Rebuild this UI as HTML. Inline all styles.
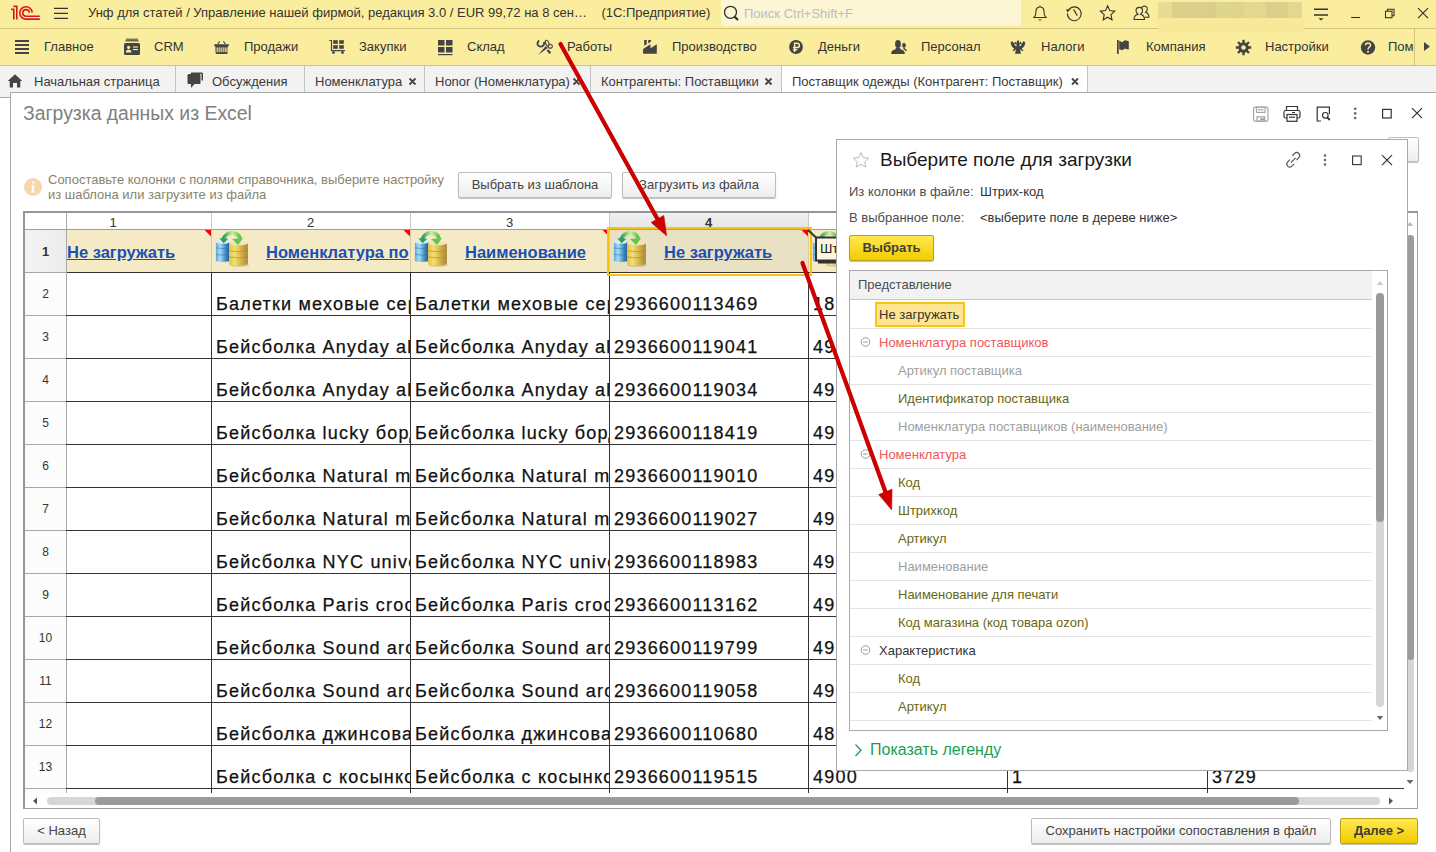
<!DOCTYPE html>
<html><head><meta charset="utf-8">
<style>
*{box-sizing:border-box}
html,body{margin:0;padding:0}
body{width:1436px;height:852px;overflow:hidden;position:relative;background:#fff;font-family:"Liberation Sans",sans-serif;color:#333;font-size:13px}
.a{position:absolute}
.t{position:absolute;white-space:nowrap;line-height:1}
svg{position:absolute;overflow:visible}
.btn{position:absolute;height:26px;border:1px solid #BDBDBD;border-radius:2px;background:linear-gradient(#fff,#EDEDED);box-shadow:0 1px 1px rgba(0,0,0,.25);font-size:13px;color:#444;text-align:center;line-height:24px;white-space:nowrap}
.cell{position:absolute;font-size:18px;color:#111;white-space:nowrap;overflow:hidden;line-height:20px;letter-spacing:1.2px;-webkit-text-stroke:0.25px #111}
</style></head><body>
<div class="a" style="left:0;top:0;width:1436px;height:28px;background:#FBED9E"></div>
<div class="a" style="left:0;top:28px;width:1436px;height:1px;background:#D3C37B"></div>
<svg style="left:0;top:0" width="50" height="28"><g fill="none" stroke="#D71920" stroke-width="1.6">
<path d="M11.1 9.4H13.8V19.6"/><path d="M13.3 6.4H16.8V19.6"/>
<path d="M32.2 12.6A6.2 6.2 0 1 0 26 19.1H39.8"/><path d="M29.3 12.6A3.3 3.3 0 1 0 26 16.2H39.8"/></g></svg>
<svg style="left:0;top:0" width="80" height="28"><g stroke="#333" stroke-width="1.2"><path d="M54 8.4H68M54 13.4H68M54 18.4H68"/></g></svg>
<div class="t" style="left:88px;top:6px;font-size:13px;color:#333">Унф для статей / Управление нашей фирмой, редакция 3.0 / EUR 99,72 на 8 сен…&nbsp;&nbsp;&nbsp;&nbsp;(1С:Предприятие)</div>
<div class="a" style="left:721px;top:0;width:300px;height:26px;background:#FDF6D5;border-radius:0 0 2px 2px"></div>
<svg style="left:0;top:0" width="760" height="28"><circle cx="730.5" cy="12.3" r="6" fill="none" stroke="#333" stroke-width="1.3"/><path d="M734.6 16.6L738 20" stroke="#333" stroke-width="2.2"/></svg>
<div class="t" style="left:744px;top:7px;font-size:13px;color:#B9BCC6">Поиск Ctrl+Shift+F</div>
<svg style="left:0;top:0" width="1436" height="28"><g fill="none" stroke="#333" stroke-width="1.1">
<path d="M1033.2 17.5H1046.8M1034 17.5C1036 15.5 1036 14 1036 11.5C1036 8.5 1038 7 1040 7C1042 7 1044 8.5 1044 11.5C1044 14 1044 15.5 1046 17.5M1040 5.4V7"/>
<path d="M1068.8 9.6A6.9 6.9 0 1 1 1067.4 13.4"/><path d="M1073.6 9.4L1077.2 15.6"/>
<path d="M1107.6 5.8L1109.7 10.6L1114.8 11.2L1111 14.6L1112 19.8L1107.6 17.2L1103.2 19.8L1104.2 14.6L1100.4 11.2L1105.5 10.6Z"/>
<path d="M1134 19.5C1134 16.2 1136 14.8 1138 14.2C1136.5 13.2 1136 12 1136 10.8C1136 8.8 1137.5 7.4 1139.3 7.4C1141.1 7.4 1142.6 8.8 1142.6 10.8C1142.6 12 1142 13.2 1140.6 14.2C1142.6 14.8 1144.5 16.2 1144.5 19.5Z"/>
<path d="M1141.5 8C1142 6.8 1143 6 1144.3 6C1146 6 1147.2 7.4 1147.2 9.2C1147.2 10.4 1146.8 11.4 1145.6 12.2C1147.4 12.8 1149 14 1149 17.3H1145"/>
</g>
<path d="M1038 19.4H1042L1040 20.8Z" fill="#333"/><path d="M1066 9.4L1070.6 9L1067.6 12.6Z" fill="#333"/>
<g stroke="#333" stroke-width="1.1" fill="none"><path d="M1314 9.2H1328M1314 15H1328" stroke-width="1.4"/><path d="M1351.2 17.5H1360"/>
<rect x="1385.5" y="11.2" width="6.5" height="6.5"/><path d="M1387.5 11.2V9.2H1394V15.7H1392"/>
<path d="M1418 8.2L1428 18.2M1428 8.2L1418 18.2" stroke-width="1.2"/></g>
<path d="M1318.5 18.2H1323.5L1321 20.6Z" fill="#333"/></svg>
<div class="a" style="left:0;top:29px;width:1436px;height:36px;background:#FBED9E"></div>
<div class="a" style="left:0;top:65px;width:1436px;height:1px;background:#D3C37B"></div>
<div class="a" style="left:1414px;top:29px;width:1px;height:36px;background:#D3C37B"></div>
<div class="t" style="left:44px;top:40px;font-size:13px;color:#333;line-height:14px">Главное</div>
<div class="t" style="left:154px;top:40px;font-size:13px;color:#333;line-height:14px">CRM</div>
<div class="t" style="left:244px;top:40px;font-size:13px;color:#333;line-height:14px">Продажи</div>
<div class="t" style="left:359px;top:40px;font-size:13px;color:#333;line-height:14px">Закупки</div>
<div class="t" style="left:467px;top:40px;font-size:13px;color:#333;line-height:14px">Склад</div>
<div class="t" style="left:567px;top:40px;font-size:13px;color:#333;line-height:14px">Работы</div>
<div class="t" style="left:672px;top:40px;font-size:13px;color:#333;line-height:14px">Производство</div>
<div class="t" style="left:818px;top:40px;font-size:13px;color:#333;line-height:14px">Деньги</div>
<div class="t" style="left:921px;top:40px;font-size:13px;color:#333;line-height:14px">Персонал</div>
<div class="t" style="left:1041px;top:40px;font-size:13px;color:#333;line-height:14px">Налоги</div>
<div class="t" style="left:1146px;top:40px;font-size:13px;color:#333;line-height:14px">Компания</div>
<div class="t" style="left:1265px;top:40px;font-size:13px;color:#333;line-height:14px">Настройки</div>
<div class="t" style="left:1388px;top:40px;width:26px;overflow:hidden;font-size:13px;color:#333;line-height:14px">Помощь</div>
<svg style="left:0;top:0" width="1436" height="66"><g fill="#444">
<rect x="15" y="40" width="14" height="2"/><rect x="15" y="44" width="14" height="2"/><rect x="15" y="48" width="14" height="2"/><rect x="15" y="52" width="14" height="2"/>
<rect x="124" y="43" width="16" height="12" rx="1.5"/><rect x="125.5" y="40.2" width="13" height="1.2"/><rect x="126" y="38.7" width="12" height="1"/>
</g><g fill="#FBED9E"><circle cx="128.6" cy="47.3" r="1.6"/><path d="M125.8 52.6C125.8 50.4 127 49.6 128.6 49.6C130.2 49.6 131.4 50.4 131.4 52.6Z"/><rect x="133" y="46.5" width="5" height="1.1"/><rect x="133" y="49" width="5" height="1.1"/></g>
<g fill="#444">
<rect x="214.2" y="44.2" width="14.7" height="1.9" rx=".5"/><path d="M215.3 46H228L227.7 53.1Q227.6 53.9 226.8 53.9H216.5Q215.7 53.9 215.6 53.1Z"/><path d="M217.6 44.3L219.7 41.3M225.5 44.3L223.4 41.3" stroke="#444" stroke-width="1.1"/>
</g><g fill="#FBED9E"><rect x="216.6" y="47.2" width="1.1" height="5" rx=".5"/><rect x="218.6" y="47.2" width="1.1" height="5" rx=".5"/><rect x="220.6" y="47.2" width="1.1" height="5" rx=".5"/><rect x="222.6" y="47.2" width="1.1" height="5" rx=".5"/><rect x="224.6" y="47.2" width="1.1" height="5" rx=".5"/><rect x="226.4" y="47.2" width="1.1" height="5" rx=".5"/></g>
<g fill="#444">
<path d="M329.3 40.5H331.5V50.6H345" stroke="#444" stroke-width="1.2" fill="none"/><rect x="333.2" y="40.2" width="4.6" height="3.6"/><rect x="339.2" y="40.2" width="4.6" height="3.6"/><rect x="333.2" y="45.2" width="4.6" height="3.6"/><rect x="339.2" y="45.2" width="4.6" height="3.6"/><circle cx="333.5" cy="52.6" r="1.4"/><circle cx="342.5" cy="52.6" r="1.4"/>
<rect x="438" y="40" width="6.5" height="5.5"/><rect x="446" y="40" width="6.5" height="5.5"/><rect x="438" y="47" width="6.5" height="5.5"/><rect x="446" y="47" width="6.5" height="5.5"/><rect x="438" y="54" width="14.5" height="1.2"/>
</g>
<g stroke="#444" stroke-width="1.9" fill="none"><path d="M539.2 40.6C537.4 41.6 537 43.6 538 45.2C539.2 46.8 541.6 47 543 45.8C544.2 44.8 544.4 43.2 543.8 42"/><path d="M547.5 50L550.3 53.2" stroke-width="2.3"/></g>
<g stroke="#444" stroke-width="1.1" fill="none"><ellipse cx="547.2" cy="43.2" rx="1.6" ry="3" transform="rotate(-20 547.2 43.2)"/><circle cx="550.3" cy="46.3" r="2"/></g>
<path d="M538.3 54.8L545.8 46L547.8 48Z" fill="#444"/>
<g fill="#444"><path d="M643.1 53.8V49L650.5 44.2V48.2L656.8 44.2V53.8Z"/><path d="M644.2 40H646.7V44.2L644.2 45.8Z"/><path d="M648.2 40H651V41.6L648.2 43.6Z"/>
<circle cx="796" cy="47" r="6.9"/><ellipse cx="898" cy="44" rx="2.9" ry="4"/><path d="M891.2 54C891 51.5 892.5 50 895 49.5L896.5 47.5H899.5L901 49.5C903.5 50 905 51.5 904.8 54Z"/><ellipse cx="904" cy="45.2" rx="1.8" ry="2.5"/><path d="M904 47.5V48.6L906.6 50.8" stroke="#444" stroke-width="1.3" fill="none"/>
<path d="M1018 40L1019.2 41.2V43.6L1020.6 41.6L1021.8 43.5L1019.5 44.5V46.5L1021 45.5C1021.5 44 1022.5 42 1024 41L1025.3 43C1025 45 1024 47.5 1021.5 48.7L1023.5 50.3L1022.8 51.2L1020 49.5L1021 53.8H1015L1016 49.5L1013.2 51.2L1012.5 50.3L1014.5 48.7C1012 47.5 1011 45 1010.7 43L1012 41C1013.5 42 1014.5 44 1015 45.5L1016.5 46.5V44.5L1014.2 43.5L1015.4 41.6L1016.8 43.6V41.2Z"/>
<rect x="1117" y="40" width="1.7" height="14"/><path d="M1119.2 40.8L1122.3 42.3C1123.5 41.2 1124.8 40.2 1126.2 40.4L1128.8 41.3V49.6L1126.2 48.9C1124.8 48.7 1123.5 49.4 1122.3 50.2C1121.5 50.1 1120.5 49.8 1119.2 49.3Z"/>
<circle cx="1243.5" cy="47.5" r="5.2"/><circle cx="1368" cy="47.5" r="7.2"/>
<path d="M1424 42L1430 46.5L1424 51Z"/></g>
<g stroke="#444" stroke-width="2.4"><path d="M1243.5 39.8V55.2M1235.8 47.5H1251.2M1238 42L1249 53M1249 42L1238 53"/></g>
<circle cx="1243.5" cy="47.5" r="2.3" fill="#FBED9E"/>
<g fill="none" stroke="#FBED9E" stroke-width="1.5"><path d="M794.6 52V43.3H797C798.6 43.3 799.4 44.3 799.4 45.5C799.4 46.7 798.6 47.6 797 47.6H793M793 49.8H797.2"/>
<path d="M1365.5 45.3C1365.5 43.8 1366.6 43 1368 43C1369.4 43 1370.5 43.8 1370.5 45.2C1370.5 47 1368 47 1368 49.5"/></g>
<circle cx="1368" cy="51.8" r="1" fill="#FBED9E"/>
</svg>
<div class="a" style="left:1158px;top:2px;width:144px;height:16px;background:linear-gradient(90deg,#E6DC94 0,#E6DC94 10%,#DAD08B 10%,#D9CF8A 40%,#DED58E 40%,#DDD38C 60%,#E2D890 60%,#E1D78F 75%,#D9CF8A 75%,#DAD08A 90%,#E1D78F 90%)"></div>
<div class="a" style="left:1158px;top:18px;width:146px;height:14px;background:#F8E897"></div>
<div class="a" style="left:0;top:66px;width:1436px;height:31px;background:#F2F2F2"></div>
<div class="a" style="left:0;top:97px;width:12px;height:1px;background:#A9A9A9"></div>
<div class="a" style="left:781px;top:66px;width:306px;height:27px;background:#fff"></div>
<div class="a" style="left:175px;top:66px;width:1px;height:27px;background:#C4C4C4"></div>
<div class="a" style="left:304px;top:66px;width:1px;height:27px;background:#C4C4C4"></div>
<div class="a" style="left:424px;top:66px;width:1px;height:27px;background:#C4C4C4"></div>
<div class="a" style="left:590px;top:66px;width:1px;height:27px;background:#C4C4C4"></div>
<div class="a" style="left:781px;top:66px;width:1px;height:27px;background:#C4C4C4"></div>
<div class="a" style="left:1087px;top:66px;width:1px;height:27px;background:#C4C4C4"></div>
<div class="t" style="left:34px;top:75px;font-size:13px;color:#3A3A3A;line-height:14px">Начальная страница</div>
<div class="t" style="left:212px;top:75px;font-size:13px;color:#3A3A3A;line-height:14px">Обсуждения</div>
<div class="t" style="left:315px;top:75px;font-size:13px;color:#3A3A3A;line-height:14px">Номенклатура</div>
<div class="t" style="left:435px;top:75px;font-size:13px;color:#3A3A3A;line-height:14px">Honor (Номенклатура)</div>
<div class="t" style="left:601px;top:75px;font-size:13px;color:#3A3A3A;line-height:14px">Контрагенты: Поставщики</div>
<div class="t" style="left:792px;top:75px;font-size:13px;color:#3A3A3A;line-height:14px">Поставщик одежды (Контрагент: Поставщик)</div>
<svg style="left:0;top:0" width="1436" height="100"><g fill="#444">
<path d="M15 74.2L22.2 81H20.3V87.5H17V83H13V87.5H9.7V81H7.8Z"/>
<path d="M189 74H199C200 74 200.5 74.5 200.5 75.5V82.5C200.5 83.5 200 84 199 84H194.5L191 88V84H189C188 84 187.5 83.5 187.5 82.5V75.5C187.5 74.5 188 74 189 74Z"/>
<path d="M191 72.5H201.5C202.5 72.5 203 73 203 74V80.5H201.5V74H191Z"/>
</g><g stroke="#444" stroke-width="1.8">
<path d="M409.5 78.5L415.5 84.5M415.5 78.5L409.5 84.5M573.5 78.5L579.5 84.5M579.5 78.5L573.5 84.5M765.5 78.5L771.5 84.5M771.5 78.5L765.5 84.5M1072 78.5L1078 84.5M1078 78.5L1072 84.5"/></g></svg>
<div class="a" style="left:10px;top:92px;width:1430px;height:770px;background:#fff;border-left:1px solid #A9A9A9;border-top:1px solid #A9A9A9"></div>
<div class="t" style="left:23px;top:103px;font-size:19.4px;color:#808080;line-height:20px">Загрузка данных из Excel</div>
<svg style="left:0;top:0" width="1436" height="130"><g fill="none" stroke-width="1.2">
<g stroke="#A6A6A6"><rect x="1253.6" y="107.2" width="14.4" height="14" rx="1.6"/><rect x="1256.5" y="107.2" width="8.6" height="5.2"/><path d="M1258 109.7H1263.6"/><rect x="1257" y="116.8" width="7.6" height="4.4"/></g>
<g stroke="#333"><path d="M1286.5 110.5V106.5H1297.5V110.5"/><rect x="1284" y="110.5" width="16" height="7.5" rx="1.8"/><rect x="1287" y="114.5" width="10" height="6.8" fill="#fff"/><path d="M1289 117.2H1295"/>
<path d="M1321 121H1317.2V107.2H1329.4V114"/><circle cx="1325.3" cy="115.3" r="2.8"/><path d="M1327.3 117.5L1329.8 120" stroke-width="1.8"/>
<rect x="1382.6" y="109.4" width="8.6" height="8.6"/><path d="M1412 108.2L1422 118.2M1422 108.2L1412 118.2"/></g></g>
<g fill="#666"><circle cx="1355.2" cy="108.8" r="1.3"/><circle cx="1355.2" cy="113.4" r="1.3"/><circle cx="1355.2" cy="118" r="1.3"/></g>
<rect x="1292" y="112" width="3" height="1" fill="#333"/><path d="M1260.3 119H1264" stroke="#A6A6A6" stroke-width="2"/>
</svg>
<svg style="left:0;top:0" width="60" height="210"><circle cx="33" cy="187" r="9" fill="#F6D7AA"/><ellipse cx="33.4" cy="182.6" rx="1.5" ry="1.1" fill="#fff"/><path d="M31.6 185.3H34.6L33.4 191.2H35L34.8 192.4H30.9L31.1 191.2H32Z" fill="#fff"/></svg>
<div class="t" style="left:48px;top:172px;font-size:13px;color:#89836A;line-height:15px">Сопоставьте колонки с полями справочника, выберите настройку<br>из шаблона или загрузите из файла</div>
<div class="btn" style="left:458px;top:172px;width:154px">Выбрать из шаблона</div>
<div class="btn" style="left:622px;top:172px;width:154px">Загрузить из файла</div>
<div class="btn" style="left:23px;top:818px;width:77px">&lt; Назад</div>
<div class="btn" style="left:1031px;top:818px;width:300px">Сохранить настройки сопоставления в файл</div>
<div class="btn" style="left:1340px;top:818px;width:78px;background:linear-gradient(#FFE94F,#F2CC00);border-color:#B9A11A;font-weight:bold;color:#3D3D3D">Далее &gt;</div>
<div class="a" style="left:23px;top:211px;width:1395px;height:598px;border:2px solid #959595;border-right:1px solid #A0A0A0;border-bottom:1px solid #A0A0A0;background:#fff"></div>
<div class="a" style="left:25px;top:213px;width:1379px;height:16px;background:#fff"></div>
<div class="a" style="left:609px;top:213px;width:199px;height:16px;background:linear-gradient(#F0F0F0,#E6E6E6)"></div>
<div class="a" style="left:66px;top:230px;width:1338px;height:42px;background:#F4EBC6"></div>
<div class="a" style="left:609px;top:230px;width:199px;height:42px;background:#E8E1C4"></div>
<div class="a" style="left:25px;top:230px;width:41px;height:42px;background:linear-gradient(90deg,#F3F3F3,#ECECEC)"></div>
<div class="a" style="left:25px;top:273px;width:41px;height:520px;background:#FCFCFC"></div>
<div class="a" style="left:25px;top:229px;width:1379px;height:1px;background:#9E9E9E"></div>
<div class="a" style="left:66px;top:272px;width:1338px;height:1px;background:#333"></div>
<div class="a" style="left:25px;top:272px;width:41px;height:1px;background:#A8A8A8"></div>
<div class="a" style="left:66px;top:213px;width:1px;height:16px;background:#A8A8A8"></div>
<div class="a" style="left:66px;top:230px;width:1px;height:563px;background:#A8A8A8"></div>
<div class="a" style="left:211px;top:213px;width:1px;height:16px;background:#C9C9C9"></div>
<div class="a" style="left:211px;top:230px;width:1px;height:42px;background:#D5CCA4"></div>
<div class="a" style="left:211px;top:273px;width:1px;height:520px;background:#333"></div>
<div class="a" style="left:410px;top:213px;width:1px;height:16px;background:#C9C9C9"></div>
<div class="a" style="left:410px;top:230px;width:1px;height:42px;background:#D5CCA4"></div>
<div class="a" style="left:410px;top:273px;width:1px;height:520px;background:#333"></div>
<div class="a" style="left:609px;top:213px;width:1px;height:16px;background:#C9C9C9"></div>
<div class="a" style="left:609px;top:230px;width:1px;height:42px;background:#D5CCA4"></div>
<div class="a" style="left:609px;top:273px;width:1px;height:520px;background:#333"></div>
<div class="a" style="left:808px;top:213px;width:1px;height:16px;background:#C9C9C9"></div>
<div class="a" style="left:808px;top:230px;width:1px;height:42px;background:#D5CCA4"></div>
<div class="a" style="left:808px;top:273px;width:1px;height:520px;background:#333"></div>
<div class="a" style="left:1007px;top:213px;width:1px;height:16px;background:#C9C9C9"></div>
<div class="a" style="left:1007px;top:230px;width:1px;height:42px;background:#D5CCA4"></div>
<div class="a" style="left:1007px;top:273px;width:1px;height:520px;background:#333"></div>
<div class="a" style="left:1207px;top:213px;width:1px;height:16px;background:#C9C9C9"></div>
<div class="a" style="left:1207px;top:230px;width:1px;height:42px;background:#D5CCA4"></div>
<div class="a" style="left:1207px;top:273px;width:1px;height:520px;background:#333"></div>
<div class="a" style="left:66px;top:315px;width:1338px;height:1px;background:#333"></div>
<div class="a" style="left:25px;top:315px;width:41px;height:1px;background:#A8A8A8"></div>
<div class="a" style="left:66px;top:358px;width:1338px;height:1px;background:#333"></div>
<div class="a" style="left:25px;top:358px;width:41px;height:1px;background:#A8A8A8"></div>
<div class="a" style="left:66px;top:401px;width:1338px;height:1px;background:#333"></div>
<div class="a" style="left:25px;top:401px;width:41px;height:1px;background:#A8A8A8"></div>
<div class="a" style="left:66px;top:444px;width:1338px;height:1px;background:#333"></div>
<div class="a" style="left:25px;top:444px;width:41px;height:1px;background:#A8A8A8"></div>
<div class="a" style="left:66px;top:487px;width:1338px;height:1px;background:#333"></div>
<div class="a" style="left:25px;top:487px;width:41px;height:1px;background:#A8A8A8"></div>
<div class="a" style="left:66px;top:530px;width:1338px;height:1px;background:#333"></div>
<div class="a" style="left:25px;top:530px;width:41px;height:1px;background:#A8A8A8"></div>
<div class="a" style="left:66px;top:573px;width:1338px;height:1px;background:#333"></div>
<div class="a" style="left:25px;top:573px;width:41px;height:1px;background:#A8A8A8"></div>
<div class="a" style="left:66px;top:616px;width:1338px;height:1px;background:#333"></div>
<div class="a" style="left:25px;top:616px;width:41px;height:1px;background:#A8A8A8"></div>
<div class="a" style="left:66px;top:659px;width:1338px;height:1px;background:#333"></div>
<div class="a" style="left:25px;top:659px;width:41px;height:1px;background:#A8A8A8"></div>
<div class="a" style="left:66px;top:702px;width:1338px;height:1px;background:#333"></div>
<div class="a" style="left:25px;top:702px;width:41px;height:1px;background:#A8A8A8"></div>
<div class="a" style="left:66px;top:745px;width:1338px;height:1px;background:#333"></div>
<div class="a" style="left:25px;top:745px;width:41px;height:1px;background:#A8A8A8"></div>
<div class="a" style="left:66px;top:788px;width:1338px;height:1px;background:#333"></div>
<div class="a" style="left:25px;top:788px;width:41px;height:1px;background:#A8A8A8"></div>
<div class="t" style="left:15px;top:216px;width:196px;text-align:center;font-size:13px;color:#333;font-weight:normal;line-height:13px">1</div>
<div class="t" style="left:211px;top:216px;width:199px;text-align:center;font-size:13px;color:#333;font-weight:normal;line-height:13px">2</div>
<div class="t" style="left:410px;top:216px;width:199px;text-align:center;font-size:13px;color:#333;font-weight:normal;line-height:13px">3</div>
<div class="t" style="left:609px;top:216px;width:199px;text-align:center;font-size:13px;color:#333;font-weight:bold;line-height:13px">4</div>
<div class="t" style="left:808px;top:216px;width:199px;text-align:center;font-size:13px;color:#333;font-weight:normal;line-height:13px">5</div>
<div class="t" style="left:1007px;top:216px;width:200px;text-align:center;font-size:13px;color:#333;font-weight:normal;line-height:13px">6</div>
<div class="t" style="left:1207px;top:216px;width:197px;text-align:center;font-size:13px;color:#333;font-weight:normal;line-height:13px">7</div>
<div class="t" style="left:25px;top:245.0px;width:41px;text-align:center;font-size:13px;color:#333;font-weight:bold;line-height:13px">1</div>
<div class="t" style="left:25px;top:288.0px;width:41px;text-align:center;font-size:12px;color:#333;font-weight:normal;line-height:13px">2</div>
<div class="t" style="left:25px;top:331.0px;width:41px;text-align:center;font-size:12px;color:#333;font-weight:normal;line-height:13px">3</div>
<div class="t" style="left:25px;top:374.0px;width:41px;text-align:center;font-size:12px;color:#333;font-weight:normal;line-height:13px">4</div>
<div class="t" style="left:25px;top:417.0px;width:41px;text-align:center;font-size:12px;color:#333;font-weight:normal;line-height:13px">5</div>
<div class="t" style="left:25px;top:460.0px;width:41px;text-align:center;font-size:12px;color:#333;font-weight:normal;line-height:13px">6</div>
<div class="t" style="left:25px;top:503.0px;width:41px;text-align:center;font-size:12px;color:#333;font-weight:normal;line-height:13px">7</div>
<div class="t" style="left:25px;top:546.0px;width:41px;text-align:center;font-size:12px;color:#333;font-weight:normal;line-height:13px">8</div>
<div class="t" style="left:25px;top:589.0px;width:41px;text-align:center;font-size:12px;color:#333;font-weight:normal;line-height:13px">9</div>
<div class="t" style="left:25px;top:632.0px;width:41px;text-align:center;font-size:12px;color:#333;font-weight:normal;line-height:13px">10</div>
<div class="t" style="left:25px;top:675.0px;width:41px;text-align:center;font-size:12px;color:#333;font-weight:normal;line-height:13px">11</div>
<div class="t" style="left:25px;top:718.0px;width:41px;text-align:center;font-size:12px;color:#333;font-weight:normal;line-height:13px">12</div>
<div class="t" style="left:25px;top:761.0px;width:41px;text-align:center;font-size:12px;color:#333;font-weight:normal;line-height:13px">13</div>
<svg style="left:0;top:0" width="1436" height="300"><g fill="#FF0000"><path d="M204.5 230H211 V236.5Z"/><path d="M403.5 230H410 V236.5Z"/><path d="M602.5 230H609 V236.5Z"/><path d="M801.5 230H808 V236.5Z"/></g></svg>
<div class="t" style="left:67px;top:243px;font-size:16.5px;font-weight:bold;color:#1A50B4;text-decoration:underline;line-height:18px">Не загружать</div>
<svg style="left:212px;top:228px" width="40" height="40" viewBox="0 0 40 40">
<defs>
<linearGradient id="bl212" x1="0" x2="1"><stop offset="0" stop-color="#5EA9DA"/><stop offset=".3" stop-color="#A6DDF5"/><stop offset=".75" stop-color="#3A80BA"/><stop offset="1" stop-color="#1E5D98"/></linearGradient>
<linearGradient id="yl212" x1="0" x2="1"><stop offset="0" stop-color="#E3C14A"/><stop offset=".3" stop-color="#F5DF70"/><stop offset=".7" stop-color="#CFAA45"/><stop offset="1" stop-color="#A8893A"/></linearGradient>
<linearGradient id="gr212" x1="0" x2="1"><stop offset="0" stop-color="#2C9A66"/><stop offset=".55" stop-color="#C8F29A"/><stop offset="1" stop-color="#5DC04E"/></linearGradient>
</defs>
<ellipse cx="27" cy="37" rx="10" ry="1.8" fill="#000" opacity=".15"/>
<path d="M3.9 14V32.4A6.9 1.7 0 0 0 17.7 32.4V14Z" fill="url(#bl212)"/>
<ellipse cx="10.8" cy="14" rx="6.9" ry="1.7" fill="#D4EEF9"/>
<path d="M3.9 19.8Q10.8 21.6 17.7 19.8M3.9 26.3Q10.8 28.1 17.7 26.3" stroke="#2F74AD" stroke-width=".9" fill="none" opacity=".6"/>
<path d="M17 15.3V35.6A9.45 2.1 0 0 0 35.9 35.6V15.3Z" fill="url(#yl212)"/>
<ellipse cx="26.45" cy="15.3" rx="9.45" ry="2.1" fill="#F1E4B4"/>
<path d="M17 22.7Q26.45 24.9 35.9 22.7M17 28.9Q26.45 31.1 35.9 28.9" stroke="#A88A2E" stroke-width=".9" fill="none" opacity=".7"/>
<path d="M11.3 12C12.3 7.5 16 5 20 5C24 5 27 7.5 28 10.5" stroke="url(#gr212)" stroke-width="4" fill="none"/>
<path d="M7.3 10.3L16.3 10.7L11.6 15.3Z" fill="#2E9C68"/>
<path d="M20.2 10.9L31.2 9.9L26 17.1Z" fill="#66C44F"/>
</svg>
<svg style="left:411px;top:228px" width="40" height="40" viewBox="0 0 40 40">
<defs>
<linearGradient id="bl411" x1="0" x2="1"><stop offset="0" stop-color="#5EA9DA"/><stop offset=".3" stop-color="#A6DDF5"/><stop offset=".75" stop-color="#3A80BA"/><stop offset="1" stop-color="#1E5D98"/></linearGradient>
<linearGradient id="yl411" x1="0" x2="1"><stop offset="0" stop-color="#E3C14A"/><stop offset=".3" stop-color="#F5DF70"/><stop offset=".7" stop-color="#CFAA45"/><stop offset="1" stop-color="#A8893A"/></linearGradient>
<linearGradient id="gr411" x1="0" x2="1"><stop offset="0" stop-color="#2C9A66"/><stop offset=".55" stop-color="#C8F29A"/><stop offset="1" stop-color="#5DC04E"/></linearGradient>
</defs>
<ellipse cx="27" cy="37" rx="10" ry="1.8" fill="#000" opacity=".15"/>
<path d="M3.9 14V32.4A6.9 1.7 0 0 0 17.7 32.4V14Z" fill="url(#bl411)"/>
<ellipse cx="10.8" cy="14" rx="6.9" ry="1.7" fill="#D4EEF9"/>
<path d="M3.9 19.8Q10.8 21.6 17.7 19.8M3.9 26.3Q10.8 28.1 17.7 26.3" stroke="#2F74AD" stroke-width=".9" fill="none" opacity=".6"/>
<path d="M17 15.3V35.6A9.45 2.1 0 0 0 35.9 35.6V15.3Z" fill="url(#yl411)"/>
<ellipse cx="26.45" cy="15.3" rx="9.45" ry="2.1" fill="#F1E4B4"/>
<path d="M17 22.7Q26.45 24.9 35.9 22.7M17 28.9Q26.45 31.1 35.9 28.9" stroke="#A88A2E" stroke-width=".9" fill="none" opacity=".7"/>
<path d="M11.3 12C12.3 7.5 16 5 20 5C24 5 27 7.5 28 10.5" stroke="url(#gr411)" stroke-width="4" fill="none"/>
<path d="M7.3 10.3L16.3 10.7L11.6 15.3Z" fill="#2E9C68"/>
<path d="M20.2 10.9L31.2 9.9L26 17.1Z" fill="#66C44F"/>
</svg>
<svg style="left:610px;top:228px" width="40" height="40" viewBox="0 0 40 40">
<defs>
<linearGradient id="bl610" x1="0" x2="1"><stop offset="0" stop-color="#5EA9DA"/><stop offset=".3" stop-color="#A6DDF5"/><stop offset=".75" stop-color="#3A80BA"/><stop offset="1" stop-color="#1E5D98"/></linearGradient>
<linearGradient id="yl610" x1="0" x2="1"><stop offset="0" stop-color="#E3C14A"/><stop offset=".3" stop-color="#F5DF70"/><stop offset=".7" stop-color="#CFAA45"/><stop offset="1" stop-color="#A8893A"/></linearGradient>
<linearGradient id="gr610" x1="0" x2="1"><stop offset="0" stop-color="#2C9A66"/><stop offset=".55" stop-color="#C8F29A"/><stop offset="1" stop-color="#5DC04E"/></linearGradient>
</defs>
<ellipse cx="27" cy="37" rx="10" ry="1.8" fill="#000" opacity=".15"/>
<path d="M3.9 14V32.4A6.9 1.7 0 0 0 17.7 32.4V14Z" fill="url(#bl610)"/>
<ellipse cx="10.8" cy="14" rx="6.9" ry="1.7" fill="#D4EEF9"/>
<path d="M3.9 19.8Q10.8 21.6 17.7 19.8M3.9 26.3Q10.8 28.1 17.7 26.3" stroke="#2F74AD" stroke-width=".9" fill="none" opacity=".6"/>
<path d="M17 15.3V35.6A9.45 2.1 0 0 0 35.9 35.6V15.3Z" fill="url(#yl610)"/>
<ellipse cx="26.45" cy="15.3" rx="9.45" ry="2.1" fill="#F1E4B4"/>
<path d="M17 22.7Q26.45 24.9 35.9 22.7M17 28.9Q26.45 31.1 35.9 28.9" stroke="#A88A2E" stroke-width=".9" fill="none" opacity=".7"/>
<path d="M11.3 12C12.3 7.5 16 5 20 5C24 5 27 7.5 28 10.5" stroke="url(#gr610)" stroke-width="4" fill="none"/>
<path d="M7.3 10.3L16.3 10.7L11.6 15.3Z" fill="#2E9C68"/>
<path d="M20.2 10.9L31.2 9.9L26 17.1Z" fill="#66C44F"/>
</svg>
<div class="t" style="left:266px;top:243px;width:143px;overflow:hidden;font-size:16.5px;font-weight:bold;color:#1A50B4;text-decoration:underline;line-height:18px;padding-bottom:3px">Номенклатура поставщиков</div>
<div class="t" style="left:465px;top:243px;font-size:16.5px;font-weight:bold;color:#1A50B4;text-decoration:underline;line-height:18px">Наименование</div>
<div class="t" style="left:664px;top:243px;font-size:16.5px;font-weight:bold;color:#1A50B4;text-decoration:underline;line-height:18px">Не загружать</div>
<svg style="left:809px;top:228px" width="40" height="40" viewBox="0 0 40 40">
<defs>
<linearGradient id="bl809" x1="0" x2="1"><stop offset="0" stop-color="#5EA9DA"/><stop offset=".3" stop-color="#A6DDF5"/><stop offset=".75" stop-color="#3A80BA"/><stop offset="1" stop-color="#1E5D98"/></linearGradient>
<linearGradient id="yl809" x1="0" x2="1"><stop offset="0" stop-color="#E3C14A"/><stop offset=".3" stop-color="#F5DF70"/><stop offset=".7" stop-color="#CFAA45"/><stop offset="1" stop-color="#A8893A"/></linearGradient>
<linearGradient id="gr809" x1="0" x2="1"><stop offset="0" stop-color="#2C9A66"/><stop offset=".55" stop-color="#C8F29A"/><stop offset="1" stop-color="#5DC04E"/></linearGradient>
</defs>
<ellipse cx="27" cy="37" rx="10" ry="1.8" fill="#000" opacity=".15"/>
<path d="M3.9 14V32.4A6.9 1.7 0 0 0 17.7 32.4V14Z" fill="url(#bl809)"/>
<ellipse cx="10.8" cy="14" rx="6.9" ry="1.7" fill="#D4EEF9"/>
<path d="M3.9 19.8Q10.8 21.6 17.7 19.8M3.9 26.3Q10.8 28.1 17.7 26.3" stroke="#2F74AD" stroke-width=".9" fill="none" opacity=".6"/>
<path d="M17 15.3V35.6A9.45 2.1 0 0 0 35.9 35.6V15.3Z" fill="url(#yl809)"/>
<ellipse cx="26.45" cy="15.3" rx="9.45" ry="2.1" fill="#F1E4B4"/>
<path d="M17 22.7Q26.45 24.9 35.9 22.7M17 28.9Q26.45 31.1 35.9 28.9" stroke="#A88A2E" stroke-width=".9" fill="none" opacity=".7"/>
<path d="M11.3 12C12.3 7.5 16 5 20 5C24 5 27 7.5 28 10.5" stroke="url(#gr809)" stroke-width="4" fill="none"/>
<path d="M7.3 10.3L16.3 10.7L11.6 15.3Z" fill="#2E9C68"/>
<path d="M20.2 10.9L31.2 9.9L26 17.1Z" fill="#66C44F"/>
</svg>
<div class="a" style="left:607px;top:226.5px;width:205px;height:49.5px;border:2px solid #F6C40E"></div>
<div class="cell" style="left:216px;top:294px;width:194px">Балетки меховые серые</div>
<div class="cell" style="left:415px;top:294px;width:194px">Балетки меховые серые</div>
<div class="cell" style="left:614px;top:294px;width:194px">2936600113469</div>
<div class="cell" style="left:813px;top:294px;width:194px">18</div>
<div class="cell" style="left:216px;top:337px;width:194px">Бейсболка Anyday alpha</div>
<div class="cell" style="left:415px;top:337px;width:194px">Бейсболка Anyday alpha</div>
<div class="cell" style="left:614px;top:337px;width:194px">2936600119041</div>
<div class="cell" style="left:813px;top:337px;width:194px">49</div>
<div class="cell" style="left:216px;top:380px;width:194px">Бейсболка Anyday alpha</div>
<div class="cell" style="left:415px;top:380px;width:194px">Бейсболка Anyday alpha</div>
<div class="cell" style="left:614px;top:380px;width:194px">2936600119034</div>
<div class="cell" style="left:813px;top:380px;width:194px">49</div>
<div class="cell" style="left:216px;top:423px;width:194px">Бейсболка lucky бордо</div>
<div class="cell" style="left:415px;top:423px;width:194px">Бейсболка lucky бордо</div>
<div class="cell" style="left:614px;top:423px;width:194px">2936600118419</div>
<div class="cell" style="left:813px;top:423px;width:194px">49</div>
<div class="cell" style="left:216px;top:466px;width:194px">Бейсболка Natural man</div>
<div class="cell" style="left:415px;top:466px;width:194px">Бейсболка Natural man</div>
<div class="cell" style="left:614px;top:466px;width:194px">2936600119010</div>
<div class="cell" style="left:813px;top:466px;width:194px">49</div>
<div class="cell" style="left:216px;top:509px;width:194px">Бейсболка Natural man</div>
<div class="cell" style="left:415px;top:509px;width:194px">Бейсболка Natural man</div>
<div class="cell" style="left:614px;top:509px;width:194px">2936600119027</div>
<div class="cell" style="left:813px;top:509px;width:194px">49</div>
<div class="cell" style="left:216px;top:552px;width:194px">Бейсболка NYC universe</div>
<div class="cell" style="left:415px;top:552px;width:194px">Бейсболка NYC universe</div>
<div class="cell" style="left:614px;top:552px;width:194px">2936600118983</div>
<div class="cell" style="left:813px;top:552px;width:194px">49</div>
<div class="cell" style="left:216px;top:595px;width:194px">Бейсболка Paris croco</div>
<div class="cell" style="left:415px;top:595px;width:194px">Бейсболка Paris croco</div>
<div class="cell" style="left:614px;top:595px;width:194px">2936600113162</div>
<div class="cell" style="left:813px;top:595px;width:194px">49</div>
<div class="cell" style="left:216px;top:638px;width:194px">Бейсболка Sound arch</div>
<div class="cell" style="left:415px;top:638px;width:194px">Бейсболка Sound arch</div>
<div class="cell" style="left:614px;top:638px;width:194px">2936600119799</div>
<div class="cell" style="left:813px;top:638px;width:194px">49</div>
<div class="cell" style="left:216px;top:681px;width:194px">Бейсболка Sound arch</div>
<div class="cell" style="left:415px;top:681px;width:194px">Бейсболка Sound arch</div>
<div class="cell" style="left:614px;top:681px;width:194px">2936600119058</div>
<div class="cell" style="left:813px;top:681px;width:194px">49</div>
<div class="cell" style="left:216px;top:724px;width:194px">Бейсболка джинсовая</div>
<div class="cell" style="left:415px;top:724px;width:194px">Бейсболка джинсовая</div>
<div class="cell" style="left:614px;top:724px;width:194px">2936600110680</div>
<div class="cell" style="left:813px;top:724px;width:194px">48</div>
<div class="cell" style="left:216px;top:767px;width:194px">Бейсболка с косынкой</div>
<div class="cell" style="left:415px;top:767px;width:194px">Бейсболка с косынкой</div>
<div class="cell" style="left:614px;top:767px;width:194px">2936600119515</div>
<div class="cell" style="left:813px;top:767px;width:194px">4900</div>
<div class="cell" style="left:1012px;top:767px;width:190px">1</div>
<div class="cell" style="left:1212px;top:767px;width:190px">3729</div>
<div class="a" style="left:25px;top:793px;width:1392px;height:15px;background:#fff"></div>
<div class="a" style="left:47px;top:797px;width:1333px;height:8px;border-radius:4px;background:#D6D6D6"></div>
<div class="a" style="left:95px;top:797px;width:1204px;height:8px;border-radius:4px;background:#9B9B9B"></div>
<div class="a" style="left:1404px;top:213px;width:13px;height:580px;background:#fff"></div>
<div class="a" style="left:1407px;top:235px;width:7px;height:537px;border-radius:3.5px;background:#D6D6D6"></div>
<div class="a" style="left:1407px;top:235px;width:7px;height:425px;border-radius:3.5px;background:#9B9B9B"></div>
<svg style="left:0;top:0" width="1436" height="852"><path d="M37 797.5V804.5L33 801Z" fill="#555"/><path d="M1389 797.5V804.5L1393 801Z" fill="#555"/><path d="M1406.5 780L1413.5 780L1410 784Z" fill="#666"/><path d="M1406.5 226L1413.5 226L1410 222Z" fill="#BBB"/></svg>
<div class="btn" style="left:1388px;top:137px;width:31px;height:25px"></div>
<svg style="left:0;top:0" width="900" height="300"><path d="M808 230L816 237.5" stroke="#333" stroke-width="2"/><rect x="818" y="240.5" width="40" height="23" fill="#333"/><rect x="816" y="237.5" width="40" height="23" fill="#FDF6DC" stroke="#333" stroke-width="2"/></svg>
<div class="t" style="left:820px;top:241.5px;font-size:13.5px;color:#222;line-height:14px">Штрих-код</div>
<div class="a" style="left:836px;top:139px;width:572px;height:632px;background:#fff;border:1px solid #A9A9A9"></div>
<svg style="left:0;top:0" width="1436" height="200"><path d="M861 152.6L863.3 157.6L868.7 158.2L864.7 161.8L865.8 167.1L861 164.4L856.2 167.1L857.3 161.8L853.3 158.2L858.7 157.6Z" fill="none" stroke="#B4BCC4" stroke-width="1"/><g fill="none" stroke="#555" stroke-width="1.1"><path d="M1292.3 155.8L1294.6 153.5C1295.8 152.3 1297.6 152.3 1298.8 153.5C1300 154.7 1300 156.5 1298.8 157.7L1296.5 160"/><path d="M1294.2 163.8L1291.9 166.1C1290.7 167.3 1288.9 167.3 1287.7 166.1C1286.5 164.9 1286.5 163.1 1287.7 161.9L1290 159.6"/><path d="M1291 162.5L1295.7 157.8"/><rect x="1352.6" y="156" width="8.6" height="8.6" stroke="#333"/><path d="M1382 155.2L1392 165.2M1392 155.2L1382 165.2" stroke="#333" stroke-width="1.2"/></g><g fill="#666"><circle cx="1325" cy="155.5" r="1.3"/><circle cx="1325" cy="160" r="1.3"/><circle cx="1325" cy="164.5" r="1.3"/></g></svg>
<div class="t" style="left:880px;top:150px;font-size:19px;color:#1A1A1A;line-height:19px">Выберите поле для загрузки</div>
<div class="t" style="left:849px;top:184.5px;font-size:13px;color:#4D4D4D;line-height:13px">Из колонки в файле:</div>
<div class="t" style="left:980px;top:184.5px;font-size:13px;color:#333;line-height:13px">Штрих-код</div>
<div class="t" style="left:849px;top:210.5px;font-size:13px;color:#4D4D4D;line-height:13px">В выбранное поле:</div>
<div class="t" style="left:980px;top:210.5px;font-size:13px;color:#333;line-height:13px">&lt;выберите поле в дереве ниже&gt;</div>
<div class="btn" style="left:849px;top:235px;width:85px;background:linear-gradient(#FFE94F,#F2CC00);border-color:#B9A11A;font-weight:bold;color:#3D3D3D">Выбрать</div>
<div class="a" style="left:849px;top:270px;width:539px;height:461px;border:1px solid #A9A9A9;background:#fff"></div>
<div class="a" style="left:850px;top:271px;width:522px;height:29px;background:#F2F2F2;border-bottom:1px solid #C8C8C8"></div>
<div class="t" style="left:858px;top:278px;font-size:13px;color:#4D4D4D;line-height:13px">Представление</div>
<div class="a" style="left:875px;top:302px;width:90px;height:25px;background:#FFE591;border:2px solid #F5C518"></div>
<div class="t" style="left:879px;top:307.5px;font-size:13px;color:#333;line-height:13px">Не загружать</div>
<div class="a" style="left:850px;top:328px;width:522px;height:1px;background:#E3E3E3"></div>
<div class="t" style="left:879px;top:335.5px;font-size:13px;color:#F0555A;line-height:13px">Номенклатура поставщиков</div>
<div class="a" style="left:850px;top:356px;width:522px;height:1px;background:#E3E3E3"></div>
<div class="t" style="left:898px;top:363.5px;font-size:13px;color:#A0A0A0;line-height:13px">Артикул поставщика</div>
<div class="a" style="left:850px;top:384px;width:522px;height:1px;background:#E3E3E3"></div>
<div class="t" style="left:898px;top:391.5px;font-size:13px;color:#6B6610;line-height:13px">Идентификатор поставщика</div>
<div class="a" style="left:850px;top:412px;width:522px;height:1px;background:#E3E3E3"></div>
<div class="t" style="left:898px;top:419.5px;font-size:13px;color:#A0A0A0;line-height:13px">Номенклатура поставщиков (наименование)</div>
<div class="a" style="left:850px;top:440px;width:522px;height:1px;background:#E3E3E3"></div>
<div class="t" style="left:879px;top:447.5px;font-size:13px;color:#F0555A;line-height:13px">Номенклатура</div>
<div class="a" style="left:850px;top:468px;width:522px;height:1px;background:#E3E3E3"></div>
<div class="t" style="left:898px;top:475.5px;font-size:13px;color:#6B6610;line-height:13px">Код</div>
<div class="a" style="left:850px;top:496px;width:522px;height:1px;background:#E3E3E3"></div>
<div class="t" style="left:898px;top:503.5px;font-size:13px;color:#6B6610;line-height:13px">Штрихкод</div>
<div class="a" style="left:850px;top:524px;width:522px;height:1px;background:#E3E3E3"></div>
<div class="t" style="left:898px;top:531.5px;font-size:13px;color:#6B6610;line-height:13px">Артикул</div>
<div class="a" style="left:850px;top:552px;width:522px;height:1px;background:#E3E3E3"></div>
<div class="t" style="left:898px;top:559.5px;font-size:13px;color:#A0A0A0;line-height:13px">Наименование</div>
<div class="a" style="left:850px;top:580px;width:522px;height:1px;background:#E3E3E3"></div>
<div class="t" style="left:898px;top:587.5px;font-size:13px;color:#6B6610;line-height:13px">Наименование для печати</div>
<div class="a" style="left:850px;top:608px;width:522px;height:1px;background:#E3E3E3"></div>
<div class="t" style="left:898px;top:615.5px;font-size:13px;color:#6B6610;line-height:13px">Код магазина (код товара ozon)</div>
<div class="a" style="left:850px;top:636px;width:522px;height:1px;background:#E3E3E3"></div>
<div class="t" style="left:879px;top:643.5px;font-size:13px;color:#333;line-height:13px">Характеристика</div>
<div class="a" style="left:850px;top:664px;width:522px;height:1px;background:#E3E3E3"></div>
<div class="t" style="left:898px;top:671.5px;font-size:13px;color:#6B6610;line-height:13px">Код</div>
<div class="a" style="left:850px;top:692px;width:522px;height:1px;background:#E3E3E3"></div>
<div class="t" style="left:898px;top:699.5px;font-size:13px;color:#6B6610;line-height:13px">Артикул</div>
<div class="a" style="left:850px;top:720px;width:522px;height:1px;background:#E3E3E3"></div>
<svg style="left:0;top:0" width="1436" height="852"><circle cx="865.5" cy="342" r="4.3" fill="none" stroke="#999" stroke-width="1"/><path d="M863.2 342H867.8" stroke="#999" stroke-width="1"/><circle cx="865.5" cy="454" r="4.3" fill="none" stroke="#999" stroke-width="1"/><path d="M863.2 454H867.8" stroke="#999" stroke-width="1"/><circle cx="865.5" cy="650" r="4.3" fill="none" stroke="#999" stroke-width="1"/><path d="M863.2 650H867.8" stroke="#999" stroke-width="1"/></svg>
<div class="a" style="left:1376px;top:293px;width:8px;height:414px;border-radius:4px;background:#D6D6D6"></div>
<div class="a" style="left:1376px;top:293px;width:8px;height:229px;border-radius:4px;background:#9B9B9B"></div>
<svg style="left:0;top:0" width="1436" height="852"><path d="M1376.8 285H1383.2L1380 281Z" fill="#C8C8C8"/><path d="M1376.8 716H1383.2L1380 720Z" fill="#666"/><path d="M855.5 744.5L861 750.3L855.5 756" fill="none" stroke="#1A9E55" stroke-width="1.3"/></svg>
<div class="t" style="left:870px;top:742px;font-size:16px;color:#1A9E55;line-height:16px">Показать легенду</div>
<svg style="left:0;top:0" width="1436" height="852"><g fill="#CC0000" stroke="#CC0000">
<path d="M560.5 44L658 220" stroke-width="4.2" stroke-linecap="round" fill="none"/>
<path d="M666.6 235.8L651.1 222.4L663.8 215.4Z" stroke-width=".6"/>
<path d="M802.5 263L885.5 492" stroke-width="4.2" stroke-linecap="round" fill="none"/>
<path d="M891.7 510L878.7 494.5L892 489.2Z" stroke-width=".6"/>
</g></svg>
</body></html>
